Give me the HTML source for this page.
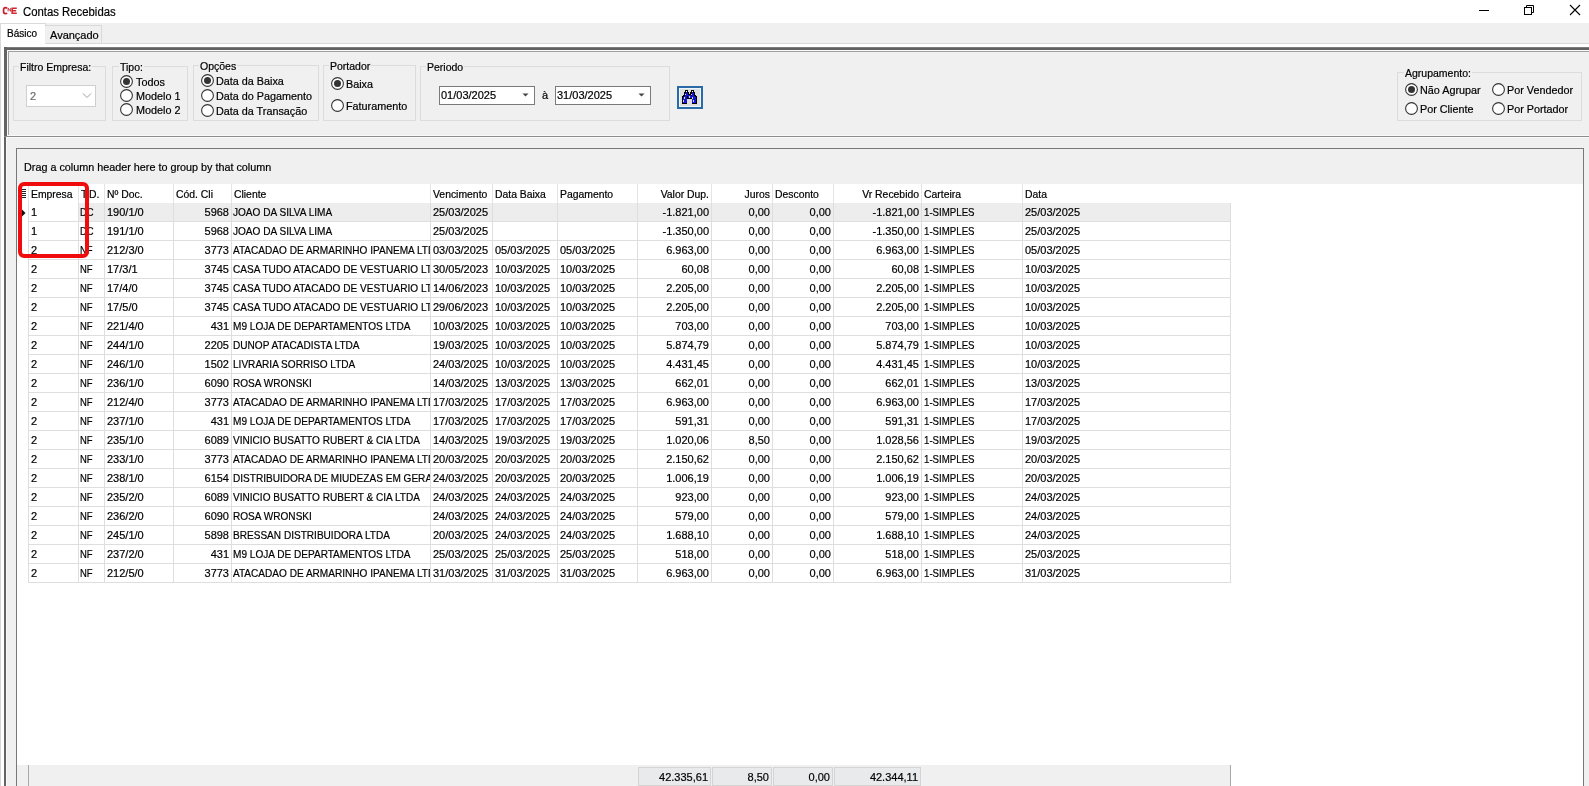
<!DOCTYPE html>
<html><head><meta charset="utf-8"><style>
html,body{margin:0;padding:0;width:1589px;height:786px;overflow:hidden;background:#f0f0f0;}
body{position:relative;font-family:"Liberation Sans", sans-serif;}
body>div,body>svg{position:absolute;}
.t{white-space:nowrap;-webkit-text-stroke:0.2px currentColor;}
body{-webkit-font-smoothing:antialiased;}
#root{position:absolute;left:0;top:0;width:1589px;height:786px;will-change:transform;}
#root>div,#root>svg{position:absolute;}
</style></head><body><div id="root">
<div style="left:0px;top:0px;width:1589px;height:23px;background:#fff"></div>
<svg style="left:0px;top:0px" width="20" height="20" viewBox="0 0 20 20"><path d="M7.1 8.4 C6.6 7.8 6.1 7.6 5.3 7.6 C4 7.6 3.5 8.9 3.5 10.7 C3.5 12.5 4 13.7 5.3 13.7 C6.1 13.7 6.6 13.5 7.1 13" fill="none" stroke="#c8202a" stroke-width="1.7"/><path d="M8.1 11.4 V8.1 L10.7 11.4 V8.1" fill="none" stroke="#d02030" stroke-width="0.95"/><path d="M16.8 8.2 H12.2 V13.3 H16.8 M12.2 10.7 H16.2" fill="none" stroke="#d02a34" stroke-width="1.6"/></svg>
<div class="t" style="left:23px;top:5.04px;font-size:12px;line-height:14px;color:#000;"><span style="display:inline-block;transform:scaleX(0.945);transform-origin:0 0">Contas Recebidas</span></div>
<div style="left:1479px;top:10px;width:10px;height:1px;background:#000"></div>
<svg style="left:1523px;top:4px" width="12" height="12" viewBox="0 0 12 12"><rect x="1.5" y="3.5" width="7" height="7" fill="none" stroke="#000" stroke-width="1"/><path d="M3.5 3.5 V1.5 H10.5 V8.5 H8.5" fill="none" stroke="#000" stroke-width="1"/></svg>
<svg style="left:1569px;top:4px" width="12" height="12" viewBox="0 0 12 12"><path d="M1 1 L11 11 M11 1 L1 11" stroke="#000" stroke-width="1.1"/></svg>
<div style="left:0px;top:23px;width:1589px;height:21px;background:#f0f0f0"></div>
<div style="left:0px;top:43px;width:1589px;height:1px;background:#d9d9d9"></div>
<div style="left:0px;top:23px;width:46px;height:21px;background:#fff;border:1px solid #d9d9d9;border-bottom:none;box-sizing:border-box"></div>
<div class="t" style="left:7px;top:27.54px;font-size:10px;line-height:12px;color:#000;">Básico</div>
<div style="left:45px;top:25px;width:57px;height:19px;background:#f0f0f0;border:1px solid #d9d9d9;border-left:none;box-sizing:border-box"></div>
<div class="t" style="left:50px;top:28.69px;font-size:11px;line-height:13px;color:#000;">Avançado</div>
<div style="left:0px;top:44px;width:1589px;height:742px;background:#f0f0f0"></div>
<div style="left:0px;top:44px;width:1px;height:742px;background:#d6d6d6"></div>
<div style="left:1px;top:44px;width:3px;height:742px;background:#fff"></div>
<div style="left:1px;top:44px;width:1589px;height:3px;background:#fff"></div>
<div style="left:4px;top:47px;width:1589px;height:1px;background:#7c7c7c"></div>
<div style="left:4px;top:48px;width:1589px;height:2px;background:#606060"></div>
<div style="left:4px;top:47px;width:3px;height:90px;background:#646464"></div>
<div style="left:7px;top:50px;width:1589px;height:1px;background:#fafafa"></div>
<div style="left:7px;top:50px;width:1px;height:86px;background:#fafafa"></div>
<div style="left:8px;top:51px;width:1589px;height:1px;background:#a0a0a0"></div>
<div style="left:8px;top:51px;width:1px;height:84px;background:#a0a0a0"></div>
<div style="left:7px;top:135px;width:1589px;height:1px;background:#fafafa"></div>
<div style="left:4px;top:136px;width:1589px;height:1px;background:#8c8c8c"></div>
<div style="left:6px;top:137px;width:1589px;height:1px;background:#fafafa"></div>
<div style="left:4px;top:137px;width:2px;height:649px;background:#646464"></div>
<div style="left:6px;top:137px;width:1px;height:649px;background:#fafafa"></div>
<div style="left:13px;top:66px;width:93px;height:55px;border:1px solid #dcdcdc;box-sizing:border-box"></div>
<div class="t" style="left:19px;top:61.36px;font-size:10.5px;line-height:12px;color:#000;"><span style="background:#f0f0f0;padding:0 1px">Filtro Empresa:</span></div>
<div style="left:26px;top:85px;width:70px;height:22px;background:#fff;border:1px solid #cfcfcf;box-sizing:border-box"></div>
<div class="t" style="left:30px;top:89.69px;font-size:11px;line-height:13px;color:#6d6d6d;">2</div>
<svg style="left:82px;top:92px" width="10" height="7" viewBox="0 0 10 7"><path d="M1 1.5 L5 5.5 L9 1.5" fill="none" stroke="#a0a0a0" stroke-width="1"/></svg>
<div style="left:112px;top:66px;width:76px;height:55px;border:1px solid #dcdcdc;box-sizing:border-box"></div>
<div class="t" style="left:119px;top:61.36px;font-size:10.5px;line-height:12px;color:#000;"><span style="background:#f0f0f0;padding:0 1px">Tipo:</span></div>
<svg style="left:120px;top:75px" width="13" height="13" viewBox="0 0 13 13"><circle cx="6.5" cy="6.5" r="5.9" fill="#fff" stroke="#333" stroke-width="1.1"/><circle cx="6.5" cy="6.5" r="3.5" fill="#333"/></svg>
<div class="t" style="left:136px;top:76.26px;font-size:10.8px;line-height:12px;color:#000;">Todos</div>
<svg style="left:120px;top:89px" width="13" height="13" viewBox="0 0 13 13"><circle cx="6.5" cy="6.5" r="5.9" fill="#fff" stroke="#333" stroke-width="1.1"/></svg>
<div class="t" style="left:136px;top:90.26px;font-size:10.8px;line-height:12px;color:#000;">Modelo 1</div>
<svg style="left:120px;top:103px" width="13" height="13" viewBox="0 0 13 13"><circle cx="6.5" cy="6.5" r="5.9" fill="#fff" stroke="#333" stroke-width="1.1"/></svg>
<div class="t" style="left:136px;top:104.26px;font-size:10.8px;line-height:12px;color:#000;">Modelo 2</div>
<div style="left:193px;top:65px;width:126px;height:56px;border:1px solid #dcdcdc;box-sizing:border-box"></div>
<div class="t" style="left:199px;top:59.86px;font-size:10.5px;line-height:12px;color:#000;"><span style="background:#f0f0f0;padding:0 1px">Opções</span></div>
<svg style="left:201px;top:74px" width="13" height="13" viewBox="0 0 13 13"><circle cx="6.5" cy="6.5" r="5.9" fill="#fff" stroke="#333" stroke-width="1.1"/><circle cx="6.5" cy="6.5" r="3.5" fill="#333"/></svg>
<div class="t" style="left:216px;top:74.76px;font-size:10.8px;line-height:12px;color:#000;">Data da Baixa</div>
<svg style="left:201px;top:89px" width="13" height="13" viewBox="0 0 13 13"><circle cx="6.5" cy="6.5" r="5.9" fill="#fff" stroke="#333" stroke-width="1.1"/></svg>
<div class="t" style="left:216px;top:89.76px;font-size:10.8px;line-height:12px;color:#000;">Data do Pagamento</div>
<svg style="left:201px;top:104px" width="13" height="13" viewBox="0 0 13 13"><circle cx="6.5" cy="6.5" r="5.9" fill="#fff" stroke="#333" stroke-width="1.1"/></svg>
<div class="t" style="left:216px;top:104.76px;font-size:10.8px;line-height:12px;color:#000;">Data da Transação</div>
<div style="left:323px;top:65px;width:93px;height:56px;border:1px solid #dcdcdc;box-sizing:border-box"></div>
<div class="t" style="left:329px;top:60.36px;font-size:10.5px;line-height:12px;color:#000;"><span style="background:#f0f0f0;padding:0 1px">Portador</span></div>
<svg style="left:331px;top:77px" width="13" height="13" viewBox="0 0 13 13"><circle cx="6.5" cy="6.5" r="5.9" fill="#fff" stroke="#333" stroke-width="1.1"/><circle cx="6.5" cy="6.5" r="3.5" fill="#333"/></svg>
<div class="t" style="left:346px;top:77.76px;font-size:10.8px;line-height:12px;color:#000;">Baixa</div>
<svg style="left:331px;top:99px" width="13" height="13" viewBox="0 0 13 13"><circle cx="6.5" cy="6.5" r="5.9" fill="#fff" stroke="#333" stroke-width="1.1"/></svg>
<div class="t" style="left:346px;top:99.76px;font-size:10.8px;line-height:12px;color:#000;">Faturamento</div>
<div style="left:420px;top:66px;width:250px;height:55px;border:1px solid #dcdcdc;box-sizing:border-box"></div>
<div class="t" style="left:426px;top:61.36px;font-size:10.5px;line-height:12px;color:#000;"><span style="background:#f0f0f0;padding:0 1px">Periodo</span></div>
<div style="left:439px;top:86px;width:96px;height:19px;background:#fff;border:1px solid #7a7a7a;box-sizing:border-box"></div>
<div class="t" style="left:441px;top:88.89px;font-size:11px;line-height:13px;color:#000;">01/03/2025</div>
<svg style="left:522px;top:93px" width="7" height="4" viewBox="0 0 7 4"><path d="M0.5 0.5 H6.5 L3.5 3.5 Z" fill="#444"/></svg>
<div class="t" style="left:542px;top:88.69px;font-size:11px;line-height:13px;color:#000;">à</div>
<div style="left:555px;top:86px;width:96px;height:19px;background:#fff;border:1px solid #7a7a7a;box-sizing:border-box"></div>
<div class="t" style="left:557px;top:88.89px;font-size:11px;line-height:13px;color:#000;">31/03/2025</div>
<svg style="left:638px;top:93px" width="7" height="4" viewBox="0 0 7 4"><path d="M0.5 0.5 H6.5 L3.5 3.5 Z" fill="#444"/></svg>
<div style="left:677px;top:86px;width:26px;height:23px;background:#dedede;border:2px solid #2b6aa6;box-sizing:border-box"></div>
<div style="left:679px;top:88px;width:22px;height:19px;border:1px solid #e8f8ff;box-sizing:border-box"></div>
<svg style="left:682px;top:90px" width="15" height="14" viewBox="0 0 15 14" shape-rendering="crispEdges"><path d="M3 0 H6 V2 H7 V4 H8 V2 H9 V0 H12 V2 H13 V5 H14 V6 H15 V14 H10 V9 H5 V14 H0 V6 H1 V5 H2 V2 H3 Z" fill="#000"/><path d="M4 1 H5 V3 H6 V6 H5 V13 H1 V7 H2 V6 H3 V3 H4 Z M10 1 H11 V3 H12 V6 H13 V7 H14 V13 H10 V8 H9 V6 H10 Z M6 5 H9 V8 H6 Z" fill="#1515d0"/><rect x="4" y="1" width="1" height="1" fill="#fff"/><rect x="10" y="1" width="1" height="1" fill="#fff"/><rect x="3" y="4" width="1" height="1" fill="#cfd8ff"/><rect x="9" y="4" width="1" height="1" fill="#cfd8ff"/><rect x="2" y="7" width="1" height="2" fill="#cfd8ff"/><rect x="7" y="6" width="1" height="2" fill="#cfd8ff"/><rect x="10" y="7" width="1" height="2" fill="#cfd8ff"/><rect x="1" y="10" width="1" height="2" fill="#cfd8ff"/><rect x="11" y="10" width="1" height="2" fill="#cfd8ff"/></svg>
<div style="left:1397px;top:72px;width:185px;height:49px;border:1px solid #dcdcdc;box-sizing:border-box"></div>
<div class="t" style="left:1404px;top:67.36px;font-size:10.5px;line-height:12px;color:#000;"><span style="background:#f0f0f0;padding:0 1px">Agrupamento:</span></div>
<svg style="left:1405px;top:83px" width="13" height="13" viewBox="0 0 13 13"><circle cx="6.5" cy="6.5" r="5.9" fill="#fff" stroke="#333" stroke-width="1.1"/><circle cx="6.5" cy="6.5" r="3.5" fill="#333"/></svg>
<div class="t" style="left:1420px;top:84.26px;font-size:10.8px;line-height:12px;color:#000;">Não Agrupar</div>
<svg style="left:1405px;top:102px" width="13" height="13" viewBox="0 0 13 13"><circle cx="6.5" cy="6.5" r="5.9" fill="#fff" stroke="#333" stroke-width="1.1"/></svg>
<div class="t" style="left:1420px;top:103.26px;font-size:10.8px;line-height:12px;color:#000;">Por Cliente</div>
<svg style="left:1492px;top:83px" width="13" height="13" viewBox="0 0 13 13"><circle cx="6.5" cy="6.5" r="5.9" fill="#fff" stroke="#333" stroke-width="1.1"/></svg>
<div class="t" style="left:1507px;top:84.26px;font-size:10.8px;line-height:12px;color:#000;">Por Vendedor</div>
<svg style="left:1492px;top:102px" width="13" height="13" viewBox="0 0 13 13"><circle cx="6.5" cy="6.5" r="5.9" fill="#fff" stroke="#333" stroke-width="1.1"/></svg>
<div class="t" style="left:1507px;top:103.26px;font-size:10.8px;line-height:12px;color:#000;">Por Portador</div>
<div style="left:16px;top:148px;width:1568px;height:638px;background:#fff;border-left:1px solid #787878;border-top:1px solid #787878;border-right:1px solid #787878;box-sizing:border-box"></div>
<div style="left:17px;top:149px;width:1566px;height:35px;background:#f0f0f0"></div>
<div class="t" style="left:24px;top:161.26px;font-size:10.8px;line-height:12px;color:#000;">Drag a column header here to group by that column</div>
<div style="left:28px;top:184px;width:1px;height:19px;background:#e4e4e4"></div>
<div style="left:78px;top:184px;width:1px;height:19px;background:#e4e4e4"></div>
<div style="left:104px;top:184px;width:1px;height:19px;background:#e4e4e4"></div>
<div style="left:173px;top:184px;width:1px;height:19px;background:#e4e4e4"></div>
<div style="left:231px;top:184px;width:1px;height:19px;background:#e4e4e4"></div>
<div style="left:430px;top:184px;width:1px;height:19px;background:#e4e4e4"></div>
<div style="left:492px;top:184px;width:1px;height:19px;background:#e4e4e4"></div>
<div style="left:557px;top:184px;width:1px;height:19px;background:#e4e4e4"></div>
<div style="left:637px;top:184px;width:1px;height:19px;background:#e4e4e4"></div>
<div style="left:711px;top:184px;width:1px;height:19px;background:#e4e4e4"></div>
<div style="left:772px;top:184px;width:1px;height:19px;background:#e4e4e4"></div>
<div style="left:833px;top:184px;width:1px;height:19px;background:#e4e4e4"></div>
<div style="left:921px;top:184px;width:1px;height:19px;background:#e4e4e4"></div>
<div style="left:1022px;top:184px;width:1px;height:19px;background:#e4e4e4"></div>
<svg style="left:20px;top:189px" width="6" height="9" viewBox="0 0 6 9" shape-rendering="crispEdges"><rect x="0" y="0" width="6" height="1" fill="#222"/><rect x="1" y="2" width="5" height="1" fill="#222"/><rect x="0" y="4" width="6" height="1" fill="#222"/><rect x="1" y="6" width="5" height="1" fill="#222"/><rect x="0" y="8" width="6" height="1" fill="#222"/></svg>
<div class="t" style="left:31px;top:188.70px;font-size:10.4px;line-height:12px;color:#000;">Empresa</div>
<div class="t" style="left:81px;top:188.70px;font-size:10.4px;line-height:12px;color:#000;">T.D.</div>
<div class="t" style="left:107px;top:188.70px;font-size:10.4px;line-height:12px;color:#000;">Nº Doc.</div>
<div class="t" style="left:176px;top:188.70px;font-size:10.4px;line-height:12px;color:#000;">Cód. Cli</div>
<div class="t" style="left:234px;top:188.70px;font-size:10.4px;line-height:12px;color:#000;">Cliente</div>
<div class="t" style="left:433px;top:188.70px;font-size:10.4px;line-height:12px;color:#000;">Vencimento</div>
<div class="t" style="left:495px;top:188.70px;font-size:10.4px;line-height:12px;color:#000;">Data Baixa</div>
<div class="t" style="left:560px;top:188.70px;font-size:10.4px;line-height:12px;color:#000;">Pagamento</div>
<div class="t" style="left:309px;width:400px;text-align:right;top:188.70px;font-size:10.4px;line-height:12px;color:#000;">Valor Dup.</div>
<div class="t" style="left:370px;width:400px;text-align:right;top:188.70px;font-size:10.4px;line-height:12px;color:#000;">Juros</div>
<div class="t" style="left:775px;top:188.70px;font-size:10.4px;line-height:12px;color:#000;">Desconto</div>
<div class="t" style="left:519px;width:400px;text-align:right;top:188.70px;font-size:10.4px;line-height:12px;color:#000;">Vr Recebido</div>
<div class="t" style="left:924px;top:188.70px;font-size:10.4px;line-height:12px;color:#000;">Carteira</div>
<div class="t" style="left:1025px;top:188.70px;font-size:10.4px;line-height:12px;color:#000;">Data</div>
<div style="left:78px;top:203px;width:1152px;height:18px;background:#ededed"></div>
<div style="left:28px;top:221px;width:1203px;height:1px;background:#dedede"></div>
<div style="left:28px;top:240px;width:1203px;height:1px;background:#dedede"></div>
<div style="left:28px;top:259px;width:1203px;height:1px;background:#dedede"></div>
<div style="left:28px;top:278px;width:1203px;height:1px;background:#dedede"></div>
<div style="left:28px;top:297px;width:1203px;height:1px;background:#dedede"></div>
<div style="left:28px;top:316px;width:1203px;height:1px;background:#dedede"></div>
<div style="left:28px;top:335px;width:1203px;height:1px;background:#dedede"></div>
<div style="left:28px;top:354px;width:1203px;height:1px;background:#dedede"></div>
<div style="left:28px;top:373px;width:1203px;height:1px;background:#dedede"></div>
<div style="left:28px;top:392px;width:1203px;height:1px;background:#dedede"></div>
<div style="left:28px;top:411px;width:1203px;height:1px;background:#dedede"></div>
<div style="left:28px;top:430px;width:1203px;height:1px;background:#dedede"></div>
<div style="left:28px;top:449px;width:1203px;height:1px;background:#dedede"></div>
<div style="left:28px;top:468px;width:1203px;height:1px;background:#dedede"></div>
<div style="left:28px;top:487px;width:1203px;height:1px;background:#dedede"></div>
<div style="left:28px;top:506px;width:1203px;height:1px;background:#dedede"></div>
<div style="left:28px;top:525px;width:1203px;height:1px;background:#dedede"></div>
<div style="left:28px;top:544px;width:1203px;height:1px;background:#dedede"></div>
<div style="left:28px;top:563px;width:1203px;height:1px;background:#dedede"></div>
<div style="left:28px;top:582px;width:1203px;height:1px;background:#dedede"></div>
<div style="left:28px;top:203px;width:1px;height:380px;background:#dedede"></div>
<div style="left:78px;top:203px;width:1px;height:380px;background:#dedede"></div>
<div style="left:104px;top:203px;width:1px;height:380px;background:#dedede"></div>
<div style="left:173px;top:203px;width:1px;height:380px;background:#dedede"></div>
<div style="left:231px;top:203px;width:1px;height:380px;background:#dedede"></div>
<div style="left:430px;top:203px;width:1px;height:380px;background:#dedede"></div>
<div style="left:492px;top:203px;width:1px;height:380px;background:#dedede"></div>
<div style="left:557px;top:203px;width:1px;height:380px;background:#dedede"></div>
<div style="left:637px;top:203px;width:1px;height:380px;background:#dedede"></div>
<div style="left:711px;top:203px;width:1px;height:380px;background:#dedede"></div>
<div style="left:772px;top:203px;width:1px;height:380px;background:#dedede"></div>
<div style="left:833px;top:203px;width:1px;height:380px;background:#dedede"></div>
<div style="left:921px;top:203px;width:1px;height:380px;background:#dedede"></div>
<div style="left:1022px;top:203px;width:1px;height:380px;background:#dedede"></div>
<div style="left:1230px;top:203px;width:1px;height:380px;background:#dedede"></div>
<svg style="left:21px;top:209px" width="5" height="8" viewBox="0 0 5 8"><path d="M0.5 0 L4.5 4 L0.5 8 Z" fill="#111"/></svg>
<div class="t" style="left:31px;top:205.69px;font-size:11px;line-height:13px;color:#000;">1</div>
<div class="t" style="left:80px;top:205.69px;font-size:11px;line-height:13px;color:#000;"><span style="display:inline-block;transform:scaleX(0.86);transform-origin:0 0">DC</span></div>
<div class="t" style="left:107px;top:205.69px;font-size:11px;line-height:13px;color:#000;">190/1/0</div>
<div class="t" style="left:-171px;width:400px;text-align:right;top:205.69px;font-size:11px;line-height:13px;color:#000;">5968</div>
<div class="t" style="left:233px;width:197px;overflow:hidden;top:205.69px;font-size:11px;line-height:13px;color:#000;white-space:nowrap"><span style="display:inline-block;transform:scaleX(0.915);transform-origin:0 0">JOAO DA SILVA LIMA</span></div>
<div class="t" style="left:433px;top:205.69px;font-size:11px;line-height:13px;color:#000;">25/03/2025</div>
<div class="t" style="left:309px;width:400px;text-align:right;top:205.69px;font-size:11px;line-height:13px;color:#000;">-1.821,00</div>
<div class="t" style="left:370px;width:400px;text-align:right;top:205.69px;font-size:11px;line-height:13px;color:#000;">0,00</div>
<div class="t" style="left:431px;width:400px;text-align:right;top:205.69px;font-size:11px;line-height:13px;color:#000;">0,00</div>
<div class="t" style="left:519px;width:400px;text-align:right;top:205.69px;font-size:11px;line-height:13px;color:#000;">-1.821,00</div>
<div class="t" style="left:924px;top:205.69px;font-size:11px;line-height:13px;color:#000;"><span style="display:inline-block;transform:scaleX(0.88);transform-origin:0 0">1-SIMPLES</span></div>
<div class="t" style="left:1025px;top:205.69px;font-size:11px;line-height:13px;color:#000;">25/03/2025</div>
<div class="t" style="left:31px;top:224.69px;font-size:11px;line-height:13px;color:#000;">1</div>
<div class="t" style="left:80px;top:224.69px;font-size:11px;line-height:13px;color:#000;"><span style="display:inline-block;transform:scaleX(0.86);transform-origin:0 0">DC</span></div>
<div class="t" style="left:107px;top:224.69px;font-size:11px;line-height:13px;color:#000;">191/1/0</div>
<div class="t" style="left:-171px;width:400px;text-align:right;top:224.69px;font-size:11px;line-height:13px;color:#000;">5968</div>
<div class="t" style="left:233px;width:197px;overflow:hidden;top:224.69px;font-size:11px;line-height:13px;color:#000;white-space:nowrap"><span style="display:inline-block;transform:scaleX(0.915);transform-origin:0 0">JOAO DA SILVA LIMA</span></div>
<div class="t" style="left:433px;top:224.69px;font-size:11px;line-height:13px;color:#000;">25/03/2025</div>
<div class="t" style="left:309px;width:400px;text-align:right;top:224.69px;font-size:11px;line-height:13px;color:#000;">-1.350,00</div>
<div class="t" style="left:370px;width:400px;text-align:right;top:224.69px;font-size:11px;line-height:13px;color:#000;">0,00</div>
<div class="t" style="left:431px;width:400px;text-align:right;top:224.69px;font-size:11px;line-height:13px;color:#000;">0,00</div>
<div class="t" style="left:519px;width:400px;text-align:right;top:224.69px;font-size:11px;line-height:13px;color:#000;">-1.350,00</div>
<div class="t" style="left:924px;top:224.69px;font-size:11px;line-height:13px;color:#000;"><span style="display:inline-block;transform:scaleX(0.88);transform-origin:0 0">1-SIMPLES</span></div>
<div class="t" style="left:1025px;top:224.69px;font-size:11px;line-height:13px;color:#000;">25/03/2025</div>
<div class="t" style="left:31px;top:243.69px;font-size:11px;line-height:13px;color:#000;">2</div>
<div class="t" style="left:80px;top:243.69px;font-size:11px;line-height:13px;color:#000;"><span style="display:inline-block;transform:scaleX(0.86);transform-origin:0 0">NF</span></div>
<div class="t" style="left:107px;top:243.69px;font-size:11px;line-height:13px;color:#000;">212/3/0</div>
<div class="t" style="left:-171px;width:400px;text-align:right;top:243.69px;font-size:11px;line-height:13px;color:#000;">3773</div>
<div class="t" style="left:233px;width:197px;overflow:hidden;top:243.69px;font-size:11px;line-height:13px;color:#000;white-space:nowrap"><span style="display:inline-block;transform:scaleX(0.915);transform-origin:0 0">ATACADAO DE ARMARINHO IPANEMA LTDA</span></div>
<div class="t" style="left:433px;top:243.69px;font-size:11px;line-height:13px;color:#000;">03/03/2025</div>
<div class="t" style="left:495px;top:243.69px;font-size:11px;line-height:13px;color:#000;">05/03/2025</div>
<div class="t" style="left:560px;top:243.69px;font-size:11px;line-height:13px;color:#000;">05/03/2025</div>
<div class="t" style="left:309px;width:400px;text-align:right;top:243.69px;font-size:11px;line-height:13px;color:#000;">6.963,00</div>
<div class="t" style="left:370px;width:400px;text-align:right;top:243.69px;font-size:11px;line-height:13px;color:#000;">0,00</div>
<div class="t" style="left:431px;width:400px;text-align:right;top:243.69px;font-size:11px;line-height:13px;color:#000;">0,00</div>
<div class="t" style="left:519px;width:400px;text-align:right;top:243.69px;font-size:11px;line-height:13px;color:#000;">6.963,00</div>
<div class="t" style="left:924px;top:243.69px;font-size:11px;line-height:13px;color:#000;"><span style="display:inline-block;transform:scaleX(0.88);transform-origin:0 0">1-SIMPLES</span></div>
<div class="t" style="left:1025px;top:243.69px;font-size:11px;line-height:13px;color:#000;">05/03/2025</div>
<div class="t" style="left:31px;top:262.69px;font-size:11px;line-height:13px;color:#000;">2</div>
<div class="t" style="left:80px;top:262.69px;font-size:11px;line-height:13px;color:#000;"><span style="display:inline-block;transform:scaleX(0.86);transform-origin:0 0">NF</span></div>
<div class="t" style="left:107px;top:262.69px;font-size:11px;line-height:13px;color:#000;">17/3/1</div>
<div class="t" style="left:-171px;width:400px;text-align:right;top:262.69px;font-size:11px;line-height:13px;color:#000;">3745</div>
<div class="t" style="left:233px;width:197px;overflow:hidden;top:262.69px;font-size:11px;line-height:13px;color:#000;white-space:nowrap"><span style="display:inline-block;transform:scaleX(0.915);transform-origin:0 0">CASA TUDO ATACADO DE VESTUARIO LTDA</span></div>
<div class="t" style="left:433px;top:262.69px;font-size:11px;line-height:13px;color:#000;">30/05/2023</div>
<div class="t" style="left:495px;top:262.69px;font-size:11px;line-height:13px;color:#000;">10/03/2025</div>
<div class="t" style="left:560px;top:262.69px;font-size:11px;line-height:13px;color:#000;">10/03/2025</div>
<div class="t" style="left:309px;width:400px;text-align:right;top:262.69px;font-size:11px;line-height:13px;color:#000;">60,08</div>
<div class="t" style="left:370px;width:400px;text-align:right;top:262.69px;font-size:11px;line-height:13px;color:#000;">0,00</div>
<div class="t" style="left:431px;width:400px;text-align:right;top:262.69px;font-size:11px;line-height:13px;color:#000;">0,00</div>
<div class="t" style="left:519px;width:400px;text-align:right;top:262.69px;font-size:11px;line-height:13px;color:#000;">60,08</div>
<div class="t" style="left:924px;top:262.69px;font-size:11px;line-height:13px;color:#000;"><span style="display:inline-block;transform:scaleX(0.88);transform-origin:0 0">1-SIMPLES</span></div>
<div class="t" style="left:1025px;top:262.69px;font-size:11px;line-height:13px;color:#000;">10/03/2025</div>
<div class="t" style="left:31px;top:281.69px;font-size:11px;line-height:13px;color:#000;">2</div>
<div class="t" style="left:80px;top:281.69px;font-size:11px;line-height:13px;color:#000;"><span style="display:inline-block;transform:scaleX(0.86);transform-origin:0 0">NF</span></div>
<div class="t" style="left:107px;top:281.69px;font-size:11px;line-height:13px;color:#000;">17/4/0</div>
<div class="t" style="left:-171px;width:400px;text-align:right;top:281.69px;font-size:11px;line-height:13px;color:#000;">3745</div>
<div class="t" style="left:233px;width:197px;overflow:hidden;top:281.69px;font-size:11px;line-height:13px;color:#000;white-space:nowrap"><span style="display:inline-block;transform:scaleX(0.915);transform-origin:0 0">CASA TUDO ATACADO DE VESTUARIO LTDA</span></div>
<div class="t" style="left:433px;top:281.69px;font-size:11px;line-height:13px;color:#000;">14/06/2023</div>
<div class="t" style="left:495px;top:281.69px;font-size:11px;line-height:13px;color:#000;">10/03/2025</div>
<div class="t" style="left:560px;top:281.69px;font-size:11px;line-height:13px;color:#000;">10/03/2025</div>
<div class="t" style="left:309px;width:400px;text-align:right;top:281.69px;font-size:11px;line-height:13px;color:#000;">2.205,00</div>
<div class="t" style="left:370px;width:400px;text-align:right;top:281.69px;font-size:11px;line-height:13px;color:#000;">0,00</div>
<div class="t" style="left:431px;width:400px;text-align:right;top:281.69px;font-size:11px;line-height:13px;color:#000;">0,00</div>
<div class="t" style="left:519px;width:400px;text-align:right;top:281.69px;font-size:11px;line-height:13px;color:#000;">2.205,00</div>
<div class="t" style="left:924px;top:281.69px;font-size:11px;line-height:13px;color:#000;"><span style="display:inline-block;transform:scaleX(0.88);transform-origin:0 0">1-SIMPLES</span></div>
<div class="t" style="left:1025px;top:281.69px;font-size:11px;line-height:13px;color:#000;">10/03/2025</div>
<div class="t" style="left:31px;top:300.69px;font-size:11px;line-height:13px;color:#000;">2</div>
<div class="t" style="left:80px;top:300.69px;font-size:11px;line-height:13px;color:#000;"><span style="display:inline-block;transform:scaleX(0.86);transform-origin:0 0">NF</span></div>
<div class="t" style="left:107px;top:300.69px;font-size:11px;line-height:13px;color:#000;">17/5/0</div>
<div class="t" style="left:-171px;width:400px;text-align:right;top:300.69px;font-size:11px;line-height:13px;color:#000;">3745</div>
<div class="t" style="left:233px;width:197px;overflow:hidden;top:300.69px;font-size:11px;line-height:13px;color:#000;white-space:nowrap"><span style="display:inline-block;transform:scaleX(0.915);transform-origin:0 0">CASA TUDO ATACADO DE VESTUARIO LTDA</span></div>
<div class="t" style="left:433px;top:300.69px;font-size:11px;line-height:13px;color:#000;">29/06/2023</div>
<div class="t" style="left:495px;top:300.69px;font-size:11px;line-height:13px;color:#000;">10/03/2025</div>
<div class="t" style="left:560px;top:300.69px;font-size:11px;line-height:13px;color:#000;">10/03/2025</div>
<div class="t" style="left:309px;width:400px;text-align:right;top:300.69px;font-size:11px;line-height:13px;color:#000;">2.205,00</div>
<div class="t" style="left:370px;width:400px;text-align:right;top:300.69px;font-size:11px;line-height:13px;color:#000;">0,00</div>
<div class="t" style="left:431px;width:400px;text-align:right;top:300.69px;font-size:11px;line-height:13px;color:#000;">0,00</div>
<div class="t" style="left:519px;width:400px;text-align:right;top:300.69px;font-size:11px;line-height:13px;color:#000;">2.205,00</div>
<div class="t" style="left:924px;top:300.69px;font-size:11px;line-height:13px;color:#000;"><span style="display:inline-block;transform:scaleX(0.88);transform-origin:0 0">1-SIMPLES</span></div>
<div class="t" style="left:1025px;top:300.69px;font-size:11px;line-height:13px;color:#000;">10/03/2025</div>
<div class="t" style="left:31px;top:319.69px;font-size:11px;line-height:13px;color:#000;">2</div>
<div class="t" style="left:80px;top:319.69px;font-size:11px;line-height:13px;color:#000;"><span style="display:inline-block;transform:scaleX(0.86);transform-origin:0 0">NF</span></div>
<div class="t" style="left:107px;top:319.69px;font-size:11px;line-height:13px;color:#000;">221/4/0</div>
<div class="t" style="left:-171px;width:400px;text-align:right;top:319.69px;font-size:11px;line-height:13px;color:#000;">431</div>
<div class="t" style="left:233px;width:197px;overflow:hidden;top:319.69px;font-size:11px;line-height:13px;color:#000;white-space:nowrap"><span style="display:inline-block;transform:scaleX(0.915);transform-origin:0 0">M9 LOJA DE DEPARTAMENTOS LTDA</span></div>
<div class="t" style="left:433px;top:319.69px;font-size:11px;line-height:13px;color:#000;">10/03/2025</div>
<div class="t" style="left:495px;top:319.69px;font-size:11px;line-height:13px;color:#000;">10/03/2025</div>
<div class="t" style="left:560px;top:319.69px;font-size:11px;line-height:13px;color:#000;">10/03/2025</div>
<div class="t" style="left:309px;width:400px;text-align:right;top:319.69px;font-size:11px;line-height:13px;color:#000;">703,00</div>
<div class="t" style="left:370px;width:400px;text-align:right;top:319.69px;font-size:11px;line-height:13px;color:#000;">0,00</div>
<div class="t" style="left:431px;width:400px;text-align:right;top:319.69px;font-size:11px;line-height:13px;color:#000;">0,00</div>
<div class="t" style="left:519px;width:400px;text-align:right;top:319.69px;font-size:11px;line-height:13px;color:#000;">703,00</div>
<div class="t" style="left:924px;top:319.69px;font-size:11px;line-height:13px;color:#000;"><span style="display:inline-block;transform:scaleX(0.88);transform-origin:0 0">1-SIMPLES</span></div>
<div class="t" style="left:1025px;top:319.69px;font-size:11px;line-height:13px;color:#000;">10/03/2025</div>
<div class="t" style="left:31px;top:338.69px;font-size:11px;line-height:13px;color:#000;">2</div>
<div class="t" style="left:80px;top:338.69px;font-size:11px;line-height:13px;color:#000;"><span style="display:inline-block;transform:scaleX(0.86);transform-origin:0 0">NF</span></div>
<div class="t" style="left:107px;top:338.69px;font-size:11px;line-height:13px;color:#000;">244/1/0</div>
<div class="t" style="left:-171px;width:400px;text-align:right;top:338.69px;font-size:11px;line-height:13px;color:#000;">2205</div>
<div class="t" style="left:233px;width:197px;overflow:hidden;top:338.69px;font-size:11px;line-height:13px;color:#000;white-space:nowrap"><span style="display:inline-block;transform:scaleX(0.915);transform-origin:0 0">DUNOP ATACADISTA LTDA</span></div>
<div class="t" style="left:433px;top:338.69px;font-size:11px;line-height:13px;color:#000;">19/03/2025</div>
<div class="t" style="left:495px;top:338.69px;font-size:11px;line-height:13px;color:#000;">10/03/2025</div>
<div class="t" style="left:560px;top:338.69px;font-size:11px;line-height:13px;color:#000;">10/03/2025</div>
<div class="t" style="left:309px;width:400px;text-align:right;top:338.69px;font-size:11px;line-height:13px;color:#000;">5.874,79</div>
<div class="t" style="left:370px;width:400px;text-align:right;top:338.69px;font-size:11px;line-height:13px;color:#000;">0,00</div>
<div class="t" style="left:431px;width:400px;text-align:right;top:338.69px;font-size:11px;line-height:13px;color:#000;">0,00</div>
<div class="t" style="left:519px;width:400px;text-align:right;top:338.69px;font-size:11px;line-height:13px;color:#000;">5.874,79</div>
<div class="t" style="left:924px;top:338.69px;font-size:11px;line-height:13px;color:#000;"><span style="display:inline-block;transform:scaleX(0.88);transform-origin:0 0">1-SIMPLES</span></div>
<div class="t" style="left:1025px;top:338.69px;font-size:11px;line-height:13px;color:#000;">10/03/2025</div>
<div class="t" style="left:31px;top:357.69px;font-size:11px;line-height:13px;color:#000;">2</div>
<div class="t" style="left:80px;top:357.69px;font-size:11px;line-height:13px;color:#000;"><span style="display:inline-block;transform:scaleX(0.86);transform-origin:0 0">NF</span></div>
<div class="t" style="left:107px;top:357.69px;font-size:11px;line-height:13px;color:#000;">246/1/0</div>
<div class="t" style="left:-171px;width:400px;text-align:right;top:357.69px;font-size:11px;line-height:13px;color:#000;">1502</div>
<div class="t" style="left:233px;width:197px;overflow:hidden;top:357.69px;font-size:11px;line-height:13px;color:#000;white-space:nowrap"><span style="display:inline-block;transform:scaleX(0.915);transform-origin:0 0">LIVRARIA SORRISO LTDA</span></div>
<div class="t" style="left:433px;top:357.69px;font-size:11px;line-height:13px;color:#000;">24/03/2025</div>
<div class="t" style="left:495px;top:357.69px;font-size:11px;line-height:13px;color:#000;">10/03/2025</div>
<div class="t" style="left:560px;top:357.69px;font-size:11px;line-height:13px;color:#000;">10/03/2025</div>
<div class="t" style="left:309px;width:400px;text-align:right;top:357.69px;font-size:11px;line-height:13px;color:#000;">4.431,45</div>
<div class="t" style="left:370px;width:400px;text-align:right;top:357.69px;font-size:11px;line-height:13px;color:#000;">0,00</div>
<div class="t" style="left:431px;width:400px;text-align:right;top:357.69px;font-size:11px;line-height:13px;color:#000;">0,00</div>
<div class="t" style="left:519px;width:400px;text-align:right;top:357.69px;font-size:11px;line-height:13px;color:#000;">4.431,45</div>
<div class="t" style="left:924px;top:357.69px;font-size:11px;line-height:13px;color:#000;"><span style="display:inline-block;transform:scaleX(0.88);transform-origin:0 0">1-SIMPLES</span></div>
<div class="t" style="left:1025px;top:357.69px;font-size:11px;line-height:13px;color:#000;">10/03/2025</div>
<div class="t" style="left:31px;top:376.69px;font-size:11px;line-height:13px;color:#000;">2</div>
<div class="t" style="left:80px;top:376.69px;font-size:11px;line-height:13px;color:#000;"><span style="display:inline-block;transform:scaleX(0.86);transform-origin:0 0">NF</span></div>
<div class="t" style="left:107px;top:376.69px;font-size:11px;line-height:13px;color:#000;">236/1/0</div>
<div class="t" style="left:-171px;width:400px;text-align:right;top:376.69px;font-size:11px;line-height:13px;color:#000;">6090</div>
<div class="t" style="left:233px;width:197px;overflow:hidden;top:376.69px;font-size:11px;line-height:13px;color:#000;white-space:nowrap"><span style="display:inline-block;transform:scaleX(0.915);transform-origin:0 0">ROSA WRONSKI</span></div>
<div class="t" style="left:433px;top:376.69px;font-size:11px;line-height:13px;color:#000;">14/03/2025</div>
<div class="t" style="left:495px;top:376.69px;font-size:11px;line-height:13px;color:#000;">13/03/2025</div>
<div class="t" style="left:560px;top:376.69px;font-size:11px;line-height:13px;color:#000;">13/03/2025</div>
<div class="t" style="left:309px;width:400px;text-align:right;top:376.69px;font-size:11px;line-height:13px;color:#000;">662,01</div>
<div class="t" style="left:370px;width:400px;text-align:right;top:376.69px;font-size:11px;line-height:13px;color:#000;">0,00</div>
<div class="t" style="left:431px;width:400px;text-align:right;top:376.69px;font-size:11px;line-height:13px;color:#000;">0,00</div>
<div class="t" style="left:519px;width:400px;text-align:right;top:376.69px;font-size:11px;line-height:13px;color:#000;">662,01</div>
<div class="t" style="left:924px;top:376.69px;font-size:11px;line-height:13px;color:#000;"><span style="display:inline-block;transform:scaleX(0.88);transform-origin:0 0">1-SIMPLES</span></div>
<div class="t" style="left:1025px;top:376.69px;font-size:11px;line-height:13px;color:#000;">13/03/2025</div>
<div class="t" style="left:31px;top:395.69px;font-size:11px;line-height:13px;color:#000;">2</div>
<div class="t" style="left:80px;top:395.69px;font-size:11px;line-height:13px;color:#000;"><span style="display:inline-block;transform:scaleX(0.86);transform-origin:0 0">NF</span></div>
<div class="t" style="left:107px;top:395.69px;font-size:11px;line-height:13px;color:#000;">212/4/0</div>
<div class="t" style="left:-171px;width:400px;text-align:right;top:395.69px;font-size:11px;line-height:13px;color:#000;">3773</div>
<div class="t" style="left:233px;width:197px;overflow:hidden;top:395.69px;font-size:11px;line-height:13px;color:#000;white-space:nowrap"><span style="display:inline-block;transform:scaleX(0.915);transform-origin:0 0">ATACADAO DE ARMARINHO IPANEMA LTDA</span></div>
<div class="t" style="left:433px;top:395.69px;font-size:11px;line-height:13px;color:#000;">17/03/2025</div>
<div class="t" style="left:495px;top:395.69px;font-size:11px;line-height:13px;color:#000;">17/03/2025</div>
<div class="t" style="left:560px;top:395.69px;font-size:11px;line-height:13px;color:#000;">17/03/2025</div>
<div class="t" style="left:309px;width:400px;text-align:right;top:395.69px;font-size:11px;line-height:13px;color:#000;">6.963,00</div>
<div class="t" style="left:370px;width:400px;text-align:right;top:395.69px;font-size:11px;line-height:13px;color:#000;">0,00</div>
<div class="t" style="left:431px;width:400px;text-align:right;top:395.69px;font-size:11px;line-height:13px;color:#000;">0,00</div>
<div class="t" style="left:519px;width:400px;text-align:right;top:395.69px;font-size:11px;line-height:13px;color:#000;">6.963,00</div>
<div class="t" style="left:924px;top:395.69px;font-size:11px;line-height:13px;color:#000;"><span style="display:inline-block;transform:scaleX(0.88);transform-origin:0 0">1-SIMPLES</span></div>
<div class="t" style="left:1025px;top:395.69px;font-size:11px;line-height:13px;color:#000;">17/03/2025</div>
<div class="t" style="left:31px;top:414.69px;font-size:11px;line-height:13px;color:#000;">2</div>
<div class="t" style="left:80px;top:414.69px;font-size:11px;line-height:13px;color:#000;"><span style="display:inline-block;transform:scaleX(0.86);transform-origin:0 0">NF</span></div>
<div class="t" style="left:107px;top:414.69px;font-size:11px;line-height:13px;color:#000;">237/1/0</div>
<div class="t" style="left:-171px;width:400px;text-align:right;top:414.69px;font-size:11px;line-height:13px;color:#000;">431</div>
<div class="t" style="left:233px;width:197px;overflow:hidden;top:414.69px;font-size:11px;line-height:13px;color:#000;white-space:nowrap"><span style="display:inline-block;transform:scaleX(0.915);transform-origin:0 0">M9 LOJA DE DEPARTAMENTOS LTDA</span></div>
<div class="t" style="left:433px;top:414.69px;font-size:11px;line-height:13px;color:#000;">17/03/2025</div>
<div class="t" style="left:495px;top:414.69px;font-size:11px;line-height:13px;color:#000;">17/03/2025</div>
<div class="t" style="left:560px;top:414.69px;font-size:11px;line-height:13px;color:#000;">17/03/2025</div>
<div class="t" style="left:309px;width:400px;text-align:right;top:414.69px;font-size:11px;line-height:13px;color:#000;">591,31</div>
<div class="t" style="left:370px;width:400px;text-align:right;top:414.69px;font-size:11px;line-height:13px;color:#000;">0,00</div>
<div class="t" style="left:431px;width:400px;text-align:right;top:414.69px;font-size:11px;line-height:13px;color:#000;">0,00</div>
<div class="t" style="left:519px;width:400px;text-align:right;top:414.69px;font-size:11px;line-height:13px;color:#000;">591,31</div>
<div class="t" style="left:924px;top:414.69px;font-size:11px;line-height:13px;color:#000;"><span style="display:inline-block;transform:scaleX(0.88);transform-origin:0 0">1-SIMPLES</span></div>
<div class="t" style="left:1025px;top:414.69px;font-size:11px;line-height:13px;color:#000;">17/03/2025</div>
<div class="t" style="left:31px;top:433.69px;font-size:11px;line-height:13px;color:#000;">2</div>
<div class="t" style="left:80px;top:433.69px;font-size:11px;line-height:13px;color:#000;"><span style="display:inline-block;transform:scaleX(0.86);transform-origin:0 0">NF</span></div>
<div class="t" style="left:107px;top:433.69px;font-size:11px;line-height:13px;color:#000;">235/1/0</div>
<div class="t" style="left:-171px;width:400px;text-align:right;top:433.69px;font-size:11px;line-height:13px;color:#000;">6089</div>
<div class="t" style="left:233px;width:197px;overflow:hidden;top:433.69px;font-size:11px;line-height:13px;color:#000;white-space:nowrap"><span style="display:inline-block;transform:scaleX(0.915);transform-origin:0 0">VINICIO BUSATTO RUBERT &amp; CIA LTDA</span></div>
<div class="t" style="left:433px;top:433.69px;font-size:11px;line-height:13px;color:#000;">14/03/2025</div>
<div class="t" style="left:495px;top:433.69px;font-size:11px;line-height:13px;color:#000;">19/03/2025</div>
<div class="t" style="left:560px;top:433.69px;font-size:11px;line-height:13px;color:#000;">19/03/2025</div>
<div class="t" style="left:309px;width:400px;text-align:right;top:433.69px;font-size:11px;line-height:13px;color:#000;">1.020,06</div>
<div class="t" style="left:370px;width:400px;text-align:right;top:433.69px;font-size:11px;line-height:13px;color:#000;">8,50</div>
<div class="t" style="left:431px;width:400px;text-align:right;top:433.69px;font-size:11px;line-height:13px;color:#000;">0,00</div>
<div class="t" style="left:519px;width:400px;text-align:right;top:433.69px;font-size:11px;line-height:13px;color:#000;">1.028,56</div>
<div class="t" style="left:924px;top:433.69px;font-size:11px;line-height:13px;color:#000;"><span style="display:inline-block;transform:scaleX(0.88);transform-origin:0 0">1-SIMPLES</span></div>
<div class="t" style="left:1025px;top:433.69px;font-size:11px;line-height:13px;color:#000;">19/03/2025</div>
<div class="t" style="left:31px;top:452.69px;font-size:11px;line-height:13px;color:#000;">2</div>
<div class="t" style="left:80px;top:452.69px;font-size:11px;line-height:13px;color:#000;"><span style="display:inline-block;transform:scaleX(0.86);transform-origin:0 0">NF</span></div>
<div class="t" style="left:107px;top:452.69px;font-size:11px;line-height:13px;color:#000;">233/1/0</div>
<div class="t" style="left:-171px;width:400px;text-align:right;top:452.69px;font-size:11px;line-height:13px;color:#000;">3773</div>
<div class="t" style="left:233px;width:197px;overflow:hidden;top:452.69px;font-size:11px;line-height:13px;color:#000;white-space:nowrap"><span style="display:inline-block;transform:scaleX(0.915);transform-origin:0 0">ATACADAO DE ARMARINHO IPANEMA LTDA</span></div>
<div class="t" style="left:433px;top:452.69px;font-size:11px;line-height:13px;color:#000;">20/03/2025</div>
<div class="t" style="left:495px;top:452.69px;font-size:11px;line-height:13px;color:#000;">20/03/2025</div>
<div class="t" style="left:560px;top:452.69px;font-size:11px;line-height:13px;color:#000;">20/03/2025</div>
<div class="t" style="left:309px;width:400px;text-align:right;top:452.69px;font-size:11px;line-height:13px;color:#000;">2.150,62</div>
<div class="t" style="left:370px;width:400px;text-align:right;top:452.69px;font-size:11px;line-height:13px;color:#000;">0,00</div>
<div class="t" style="left:431px;width:400px;text-align:right;top:452.69px;font-size:11px;line-height:13px;color:#000;">0,00</div>
<div class="t" style="left:519px;width:400px;text-align:right;top:452.69px;font-size:11px;line-height:13px;color:#000;">2.150,62</div>
<div class="t" style="left:924px;top:452.69px;font-size:11px;line-height:13px;color:#000;"><span style="display:inline-block;transform:scaleX(0.88);transform-origin:0 0">1-SIMPLES</span></div>
<div class="t" style="left:1025px;top:452.69px;font-size:11px;line-height:13px;color:#000;">20/03/2025</div>
<div class="t" style="left:31px;top:471.69px;font-size:11px;line-height:13px;color:#000;">2</div>
<div class="t" style="left:80px;top:471.69px;font-size:11px;line-height:13px;color:#000;"><span style="display:inline-block;transform:scaleX(0.86);transform-origin:0 0">NF</span></div>
<div class="t" style="left:107px;top:471.69px;font-size:11px;line-height:13px;color:#000;">238/1/0</div>
<div class="t" style="left:-171px;width:400px;text-align:right;top:471.69px;font-size:11px;line-height:13px;color:#000;">6154</div>
<div class="t" style="left:233px;width:197px;overflow:hidden;top:471.69px;font-size:11px;line-height:13px;color:#000;white-space:nowrap"><span style="display:inline-block;transform:scaleX(0.915);transform-origin:0 0">DISTRIBUIDORA DE MIUDEZAS EM GERAL</span></div>
<div class="t" style="left:433px;top:471.69px;font-size:11px;line-height:13px;color:#000;">24/03/2025</div>
<div class="t" style="left:495px;top:471.69px;font-size:11px;line-height:13px;color:#000;">20/03/2025</div>
<div class="t" style="left:560px;top:471.69px;font-size:11px;line-height:13px;color:#000;">20/03/2025</div>
<div class="t" style="left:309px;width:400px;text-align:right;top:471.69px;font-size:11px;line-height:13px;color:#000;">1.006,19</div>
<div class="t" style="left:370px;width:400px;text-align:right;top:471.69px;font-size:11px;line-height:13px;color:#000;">0,00</div>
<div class="t" style="left:431px;width:400px;text-align:right;top:471.69px;font-size:11px;line-height:13px;color:#000;">0,00</div>
<div class="t" style="left:519px;width:400px;text-align:right;top:471.69px;font-size:11px;line-height:13px;color:#000;">1.006,19</div>
<div class="t" style="left:924px;top:471.69px;font-size:11px;line-height:13px;color:#000;"><span style="display:inline-block;transform:scaleX(0.88);transform-origin:0 0">1-SIMPLES</span></div>
<div class="t" style="left:1025px;top:471.69px;font-size:11px;line-height:13px;color:#000;">20/03/2025</div>
<div class="t" style="left:31px;top:490.69px;font-size:11px;line-height:13px;color:#000;">2</div>
<div class="t" style="left:80px;top:490.69px;font-size:11px;line-height:13px;color:#000;"><span style="display:inline-block;transform:scaleX(0.86);transform-origin:0 0">NF</span></div>
<div class="t" style="left:107px;top:490.69px;font-size:11px;line-height:13px;color:#000;">235/2/0</div>
<div class="t" style="left:-171px;width:400px;text-align:right;top:490.69px;font-size:11px;line-height:13px;color:#000;">6089</div>
<div class="t" style="left:233px;width:197px;overflow:hidden;top:490.69px;font-size:11px;line-height:13px;color:#000;white-space:nowrap"><span style="display:inline-block;transform:scaleX(0.915);transform-origin:0 0">VINICIO BUSATTO RUBERT &amp; CIA LTDA</span></div>
<div class="t" style="left:433px;top:490.69px;font-size:11px;line-height:13px;color:#000;">24/03/2025</div>
<div class="t" style="left:495px;top:490.69px;font-size:11px;line-height:13px;color:#000;">24/03/2025</div>
<div class="t" style="left:560px;top:490.69px;font-size:11px;line-height:13px;color:#000;">24/03/2025</div>
<div class="t" style="left:309px;width:400px;text-align:right;top:490.69px;font-size:11px;line-height:13px;color:#000;">923,00</div>
<div class="t" style="left:370px;width:400px;text-align:right;top:490.69px;font-size:11px;line-height:13px;color:#000;">0,00</div>
<div class="t" style="left:431px;width:400px;text-align:right;top:490.69px;font-size:11px;line-height:13px;color:#000;">0,00</div>
<div class="t" style="left:519px;width:400px;text-align:right;top:490.69px;font-size:11px;line-height:13px;color:#000;">923,00</div>
<div class="t" style="left:924px;top:490.69px;font-size:11px;line-height:13px;color:#000;"><span style="display:inline-block;transform:scaleX(0.88);transform-origin:0 0">1-SIMPLES</span></div>
<div class="t" style="left:1025px;top:490.69px;font-size:11px;line-height:13px;color:#000;">24/03/2025</div>
<div class="t" style="left:31px;top:509.69px;font-size:11px;line-height:13px;color:#000;">2</div>
<div class="t" style="left:80px;top:509.69px;font-size:11px;line-height:13px;color:#000;"><span style="display:inline-block;transform:scaleX(0.86);transform-origin:0 0">NF</span></div>
<div class="t" style="left:107px;top:509.69px;font-size:11px;line-height:13px;color:#000;">236/2/0</div>
<div class="t" style="left:-171px;width:400px;text-align:right;top:509.69px;font-size:11px;line-height:13px;color:#000;">6090</div>
<div class="t" style="left:233px;width:197px;overflow:hidden;top:509.69px;font-size:11px;line-height:13px;color:#000;white-space:nowrap"><span style="display:inline-block;transform:scaleX(0.915);transform-origin:0 0">ROSA WRONSKI</span></div>
<div class="t" style="left:433px;top:509.69px;font-size:11px;line-height:13px;color:#000;">24/03/2025</div>
<div class="t" style="left:495px;top:509.69px;font-size:11px;line-height:13px;color:#000;">24/03/2025</div>
<div class="t" style="left:560px;top:509.69px;font-size:11px;line-height:13px;color:#000;">24/03/2025</div>
<div class="t" style="left:309px;width:400px;text-align:right;top:509.69px;font-size:11px;line-height:13px;color:#000;">579,00</div>
<div class="t" style="left:370px;width:400px;text-align:right;top:509.69px;font-size:11px;line-height:13px;color:#000;">0,00</div>
<div class="t" style="left:431px;width:400px;text-align:right;top:509.69px;font-size:11px;line-height:13px;color:#000;">0,00</div>
<div class="t" style="left:519px;width:400px;text-align:right;top:509.69px;font-size:11px;line-height:13px;color:#000;">579,00</div>
<div class="t" style="left:924px;top:509.69px;font-size:11px;line-height:13px;color:#000;"><span style="display:inline-block;transform:scaleX(0.88);transform-origin:0 0">1-SIMPLES</span></div>
<div class="t" style="left:1025px;top:509.69px;font-size:11px;line-height:13px;color:#000;">24/03/2025</div>
<div class="t" style="left:31px;top:528.69px;font-size:11px;line-height:13px;color:#000;">2</div>
<div class="t" style="left:80px;top:528.69px;font-size:11px;line-height:13px;color:#000;"><span style="display:inline-block;transform:scaleX(0.86);transform-origin:0 0">NF</span></div>
<div class="t" style="left:107px;top:528.69px;font-size:11px;line-height:13px;color:#000;">245/1/0</div>
<div class="t" style="left:-171px;width:400px;text-align:right;top:528.69px;font-size:11px;line-height:13px;color:#000;">5898</div>
<div class="t" style="left:233px;width:197px;overflow:hidden;top:528.69px;font-size:11px;line-height:13px;color:#000;white-space:nowrap"><span style="display:inline-block;transform:scaleX(0.915);transform-origin:0 0">BRESSAN DISTRIBUIDORA LTDA</span></div>
<div class="t" style="left:433px;top:528.69px;font-size:11px;line-height:13px;color:#000;">20/03/2025</div>
<div class="t" style="left:495px;top:528.69px;font-size:11px;line-height:13px;color:#000;">24/03/2025</div>
<div class="t" style="left:560px;top:528.69px;font-size:11px;line-height:13px;color:#000;">24/03/2025</div>
<div class="t" style="left:309px;width:400px;text-align:right;top:528.69px;font-size:11px;line-height:13px;color:#000;">1.688,10</div>
<div class="t" style="left:370px;width:400px;text-align:right;top:528.69px;font-size:11px;line-height:13px;color:#000;">0,00</div>
<div class="t" style="left:431px;width:400px;text-align:right;top:528.69px;font-size:11px;line-height:13px;color:#000;">0,00</div>
<div class="t" style="left:519px;width:400px;text-align:right;top:528.69px;font-size:11px;line-height:13px;color:#000;">1.688,10</div>
<div class="t" style="left:924px;top:528.69px;font-size:11px;line-height:13px;color:#000;"><span style="display:inline-block;transform:scaleX(0.88);transform-origin:0 0">1-SIMPLES</span></div>
<div class="t" style="left:1025px;top:528.69px;font-size:11px;line-height:13px;color:#000;">24/03/2025</div>
<div class="t" style="left:31px;top:547.69px;font-size:11px;line-height:13px;color:#000;">2</div>
<div class="t" style="left:80px;top:547.69px;font-size:11px;line-height:13px;color:#000;"><span style="display:inline-block;transform:scaleX(0.86);transform-origin:0 0">NF</span></div>
<div class="t" style="left:107px;top:547.69px;font-size:11px;line-height:13px;color:#000;">237/2/0</div>
<div class="t" style="left:-171px;width:400px;text-align:right;top:547.69px;font-size:11px;line-height:13px;color:#000;">431</div>
<div class="t" style="left:233px;width:197px;overflow:hidden;top:547.69px;font-size:11px;line-height:13px;color:#000;white-space:nowrap"><span style="display:inline-block;transform:scaleX(0.915);transform-origin:0 0">M9 LOJA DE DEPARTAMENTOS LTDA</span></div>
<div class="t" style="left:433px;top:547.69px;font-size:11px;line-height:13px;color:#000;">25/03/2025</div>
<div class="t" style="left:495px;top:547.69px;font-size:11px;line-height:13px;color:#000;">25/03/2025</div>
<div class="t" style="left:560px;top:547.69px;font-size:11px;line-height:13px;color:#000;">25/03/2025</div>
<div class="t" style="left:309px;width:400px;text-align:right;top:547.69px;font-size:11px;line-height:13px;color:#000;">518,00</div>
<div class="t" style="left:370px;width:400px;text-align:right;top:547.69px;font-size:11px;line-height:13px;color:#000;">0,00</div>
<div class="t" style="left:431px;width:400px;text-align:right;top:547.69px;font-size:11px;line-height:13px;color:#000;">0,00</div>
<div class="t" style="left:519px;width:400px;text-align:right;top:547.69px;font-size:11px;line-height:13px;color:#000;">518,00</div>
<div class="t" style="left:924px;top:547.69px;font-size:11px;line-height:13px;color:#000;"><span style="display:inline-block;transform:scaleX(0.88);transform-origin:0 0">1-SIMPLES</span></div>
<div class="t" style="left:1025px;top:547.69px;font-size:11px;line-height:13px;color:#000;">25/03/2025</div>
<div class="t" style="left:31px;top:566.69px;font-size:11px;line-height:13px;color:#000;">2</div>
<div class="t" style="left:80px;top:566.69px;font-size:11px;line-height:13px;color:#000;"><span style="display:inline-block;transform:scaleX(0.86);transform-origin:0 0">NF</span></div>
<div class="t" style="left:107px;top:566.69px;font-size:11px;line-height:13px;color:#000;">212/5/0</div>
<div class="t" style="left:-171px;width:400px;text-align:right;top:566.69px;font-size:11px;line-height:13px;color:#000;">3773</div>
<div class="t" style="left:233px;width:197px;overflow:hidden;top:566.69px;font-size:11px;line-height:13px;color:#000;white-space:nowrap"><span style="display:inline-block;transform:scaleX(0.915);transform-origin:0 0">ATACADAO DE ARMARINHO IPANEMA LTDA</span></div>
<div class="t" style="left:433px;top:566.69px;font-size:11px;line-height:13px;color:#000;">31/03/2025</div>
<div class="t" style="left:495px;top:566.69px;font-size:11px;line-height:13px;color:#000;">31/03/2025</div>
<div class="t" style="left:560px;top:566.69px;font-size:11px;line-height:13px;color:#000;">31/03/2025</div>
<div class="t" style="left:309px;width:400px;text-align:right;top:566.69px;font-size:11px;line-height:13px;color:#000;">6.963,00</div>
<div class="t" style="left:370px;width:400px;text-align:right;top:566.69px;font-size:11px;line-height:13px;color:#000;">0,00</div>
<div class="t" style="left:431px;width:400px;text-align:right;top:566.69px;font-size:11px;line-height:13px;color:#000;">0,00</div>
<div class="t" style="left:519px;width:400px;text-align:right;top:566.69px;font-size:11px;line-height:13px;color:#000;">6.963,00</div>
<div class="t" style="left:924px;top:566.69px;font-size:11px;line-height:13px;color:#000;"><span style="display:inline-block;transform:scaleX(0.88);transform-origin:0 0">1-SIMPLES</span></div>
<div class="t" style="left:1025px;top:566.69px;font-size:11px;line-height:13px;color:#000;">31/03/2025</div>
<div style="left:17px;top:765px;width:1213px;height:21px;background:#f0f0f0"></div>
<div style="left:28px;top:765px;width:1px;height:21px;background:#a8a8a8"></div>
<div style="left:1230px;top:765px;width:1px;height:21px;background:#a8a8a8"></div>
<div style="left:638px;top:767px;width:73px;height:19px;background:#e8eaec;border:1px solid #d4d4d4;box-sizing:border-box"></div>
<div class="t" style="left:308px;width:400px;text-align:right;top:770.69px;font-size:11px;line-height:13px;color:#000;">42.335,61</div>
<div style="left:712px;top:767px;width:60px;height:19px;background:#e8eaec;border:1px solid #d4d4d4;box-sizing:border-box"></div>
<div class="t" style="left:369px;width:400px;text-align:right;top:770.69px;font-size:11px;line-height:13px;color:#000;">8,50</div>
<div style="left:773px;top:767px;width:60px;height:19px;background:#e8eaec;border:1px solid #d4d4d4;box-sizing:border-box"></div>
<div class="t" style="left:430px;width:400px;text-align:right;top:770.69px;font-size:11px;line-height:13px;color:#000;">0,00</div>
<div style="left:834px;top:767px;width:87px;height:19px;background:#e8eaec;border:1px solid #d4d4d4;box-sizing:border-box"></div>
<div class="t" style="left:518px;width:400px;text-align:right;top:770.69px;font-size:11px;line-height:13px;color:#000;">42.344,11</div>
<div style="left:18px;top:182px;width:71px;height:76px;border:4px solid #f00c0c;border-radius:6px;box-sizing:border-box"></div>
</div></body></html>
